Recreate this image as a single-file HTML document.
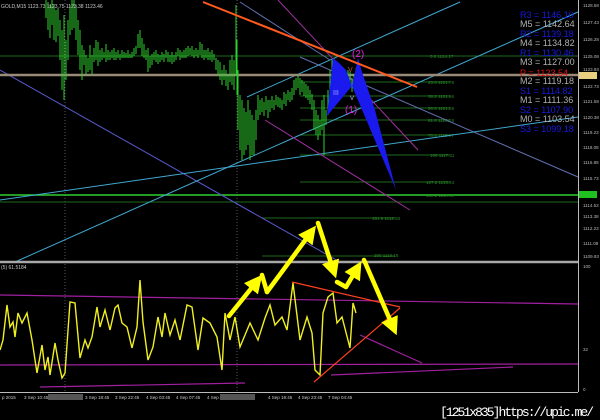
<!DOCTYPE html><html><head><style>html,body{margin:0;padding:0;background:#000;width:600px;height:420px;overflow:hidden}</style></head><body>
<svg width="600" height="420" xmlns="http://www.w3.org/2000/svg" font-family="Liberation Sans, sans-serif">
<defs><marker id="ah" markerWidth="4" markerHeight="4" refX="2.5" refY="2" orient="auto" markerUnits="strokeWidth"><path d="M0,0 L4,2 L0,4 z" fill="#ffff00"/></marker></defs>
<rect width="600" height="420" fill="#000"/>
<line x1="65" y1="0" x2="65" y2="392" stroke="#556" stroke-dasharray="1,2"/>
<line x1="237" y1="0" x2="237" y2="392" stroke="#556" stroke-dasharray="1,2"/>
<g stroke="#1e6a1e" stroke-width="1">
<line x1="0" y1="56" x2="578" y2="56"/><line x1="300" y1="82" x2="450" y2="82"/><line x1="300" y1="96" x2="450" y2="96"/>
<line x1="300" y1="108" x2="450" y2="108"/><line x1="300" y1="120" x2="450" y2="120"/><line x1="300" y1="135" x2="450" y2="135"/>
<line x1="300" y1="155" x2="450" y2="155"/><line x1="300" y1="182" x2="450" y2="182"/><line x1="0" y1="202" x2="578" y2="202"/>
<line x1="262" y1="218" x2="395" y2="218"/><line x1="262" y1="256" x2="395" y2="256"/>
</g>
<line x1="0" y1="195" x2="578" y2="195" stroke="#2fd02f" stroke-width="1.5"/>
<g fill="#2a8a2a" font-size="4.5"><text x="430" y="58">0.0 1124.17</text><text x="428" y="84">23.6 1121.78</text><text x="428" y="98">38.2 1121.96</text><text x="428" y="110">50.0 1121.09</text><text x="428" y="122">61.8 1120.18</text><text x="428" y="137">78.6 1118.97</text><text x="430" y="157">100 1117.31</text><text x="426" y="184">127.2 1115.44</text><text x="426" y="197">138.2 1114.64</text><text x="372" y="220">161.8 1112.93</text><text x="374" y="257">200 1110.18</text></g>
<g fill="none" stroke-width="1">
<line x1="0" y1="70" x2="340" y2="262" stroke="#5a5ad0"/>
<line x1="300" y1="57" x2="578" y2="177" stroke="#6070b0"/>
<line x1="0" y1="200" x2="578" y2="117" stroke="#40a8d0"/>
<line x1="15" y1="262" x2="300" y2="135" stroke="#40a8d0"/><line x1="300" y1="135" x2="578" y2="12" stroke="#40a8d0"/>
<line x1="247" y1="97" x2="460" y2="2" stroke="#40a8d0"/>
<line x1="240" y1="2" x2="330" y2="60" stroke="#6070b0"/>
<line x1="278" y1="0" x2="418" y2="150" stroke="#a030a0"/>
<line x1="265" y1="120" x2="410" y2="210" stroke="#a030a0"/>
</g>
<line x1="0" y1="75" x2="578" y2="75" stroke="#9a8a78" stroke-width="2.5"/>
<path stroke="#2ed02e" stroke-width="1" fill="none" d="M46 0V18 M48 2V30 M50 5V38 M52 0V25 M54 4V40 M56 10V42 M58 8V36 M60 20V60 M62 30V90 M64 15V100 M66 40V80 M68 20V60 M70 5V35 M72 0V30 M74 0V28 M76 5V40 M78 20V55 M80 30V70 M82 45V80 M84 50V65 M86 55V75 M88 58V72 M90 45V70 M92 55V75 M94 48V62 M96 40V60 M98 42V66 M100 50V62 M102 48V60 M104 52V58 M106 44V62 M108 50V60 M110 52V60 M112 50V58 M114 48V60 M116 52V60 M118 50V58 M120 54V60 M122 50V58 M124 52V58 M126 53V58 M128 50V58 M130 54V58 M132 52V58 M134 48V56 M136 46V54 M138 34V48 M140 30V48 M142 38V56 M144 44V58 M146 50V60 M148 48V72 M150 56V68 M152 54V65 M154 52V60 M156 50V62 M158 54V64 M160 55V62 M162 52V60 M164 54V62 M166 50V58 M168 52V62 M170 55V62 M172 52V64 M174 55V62 M176 52V60 M178 48V56 M180 50V60 M182 52V58 M184 50V58 M186 48V58 M188 46V56 M190 48V55 M192 46V56 M194 50V58 M196 48V56 M198 50V58 M200 42V55 M202 44V58 M204 50V60 M206 50V58 M208 48V60 M210 52V60 M212 50V62 M214 54V60 M216 58V70 M218 60V75 M220 62V80 M222 70V85 M224 65V80 M226 70V86 M228 75V90 M230 60V82 M232 55V85 M234 60V90 M236 5V75 M237 40V95 M238 70V130 M240 95V150 M242 100V160 M244 108V155 M246 112V150 M248 100V145 M250 110V160 M252 115V155 M254 120V155 M256 110V140 M258 95V120 M260 100V115 M262 98V112 M264 102V116 M266 96V110 M268 100V118 M270 100V112 M272 96V108 M274 100V110 M276 95V105 M278 97V107 M280 98V108 M282 100V110 M284 92V104 M286 94V106 M288 90V100 M290 92V102 M292 88V100 M294 80V95 M296 78V90 M298 75V88 M300 78V95 M302 80V92 M304 82V96 M306 84V98 M308 86V100 M310 90V104 M312 94V110 M314 100V130 M316 110V135 M318 115V140 M320 120V135 M322 100V130 M324 95V155 M326 110V125 M328 90V115 M330 70V100 M332 60V90 M334 58V80 M336 62V85 M338 66V95 M340 70V90 M342 72V85 M344 74V85 M346 76V88 M348 70V85 M350 72V82 M352 78V92 M354 74V85 M356 68V80 M358 60V72"/>
<polygon points="333,58 327,116 352,86 346,70 338,62" fill="#1a1aee"/>
<polygon points="358,58 352,86 396,190 375,110 362,72" fill="#1a1aee"/>
<text x="333" y="95" fill="#a0a0ff" font-size="7">III</text>
<text x="348" y="72" fill="#c06030" font-size="7">V</text>
<text x="350" y="100" fill="#c0c0ff" font-size="6">V</text>
<text x="352" y="57" fill="#e020e0" font-size="10">(2)</text>
<text x="345" y="113" fill="#e020e0" font-size="10">(1)</text>
<line x1="203" y1="2" x2="417" y2="87" stroke="#ff5a20" stroke-width="2"/>
<g font-size="9">
<text x="520" y="18" fill="#1a1ae0">R3 = 1146.10</text>
<text x="520" y="27" fill="#b0b0b0">M5 = 1142.64</text>
<text x="520" y="37" fill="#1a1ae0">R2 = 1139.18</text>
<text x="520" y="46" fill="#b0b0b0">M4 = 1134.82</text>
<text x="520" y="56" fill="#1a1ae0">R1 = 1130.46</text>
<text x="520" y="65" fill="#b0b0b0">M3 = 1127.00</text>
<text x="520" y="76" fill="#e01010">P  = 1123.54</text>
<text x="520" y="84" fill="#b0b0b0">M2 = 1119.18</text>
<text x="520" y="94" fill="#1a1ae0">S1 = 1114.82</text>
<text x="520" y="103" fill="#b0b0b0">M1 = 1111.36</text>
<text x="520" y="113" fill="#1a1ae0">S2 = 1107.90</text>
<text x="520" y="122" fill="#b0b0b0">M0 = 1103.54</text>
<text x="520" y="132" fill="#1a1ae0">S3 = 1099.18</text>
</g>
<line x1="578.5" y1="0" x2="578.5" y2="392" stroke="#bbb"/>
<g fill="#bbb" font-size="4.5">
<text x="583" y="7">1128.58</text><text x="583" y="24">1127.43</text><text x="583" y="41">1126.28</text><text x="583" y="58">1125.08</text><text x="583" y="71">1123.93</text><text x="583" y="88">1122.73</text><text x="583" y="103">1121.58</text><text x="583" y="119">1120.38</text><text x="583" y="134">1119.23</text><text x="583" y="149">1118.08</text><text x="583" y="164">1116.88</text><text x="583" y="180">1115.73</text><text x="583" y="207">1114.53</text><text x="583" y="218">1113.38</text><text x="583" y="230">1112.23</text><text x="583" y="245">1111.08</text><text x="583" y="258">1109.93</text><text x="583" y="268">100</text><text x="583" y="351">32</text><text x="583" y="391">0</text>
</g>
<rect x="579" y="72" width="18" height="7" fill="#e8d080"/>
<rect x="579" y="191" width="18" height="7" fill="#20c020"/>
<text x="1" y="8" fill="#ccc" font-size="5">GOLD,M15  1123.73  1123.75  1123.38  1123.46</text>
<line x1="0" y1="262" x2="578" y2="262" stroke="#a8a8a8" stroke-width="2.5"/>
<text x="1" y="269" fill="#ccc" font-size="5">(5) 61.5184</text>
<g stroke="#a020a0" stroke-width="1.2" fill="none">
<line x1="0" y1="295" x2="578" y2="304"/><line x1="0" y1="365" x2="578" y2="364"/>
<line x1="40" y1="387" x2="245" y2="383"/><line x1="331" y1="375" x2="513" y2="367"/><line x1="360" y1="335" x2="422" y2="363"/>
</g>
<polyline fill="none" stroke="#f0f020" stroke-width="1.4" points="0,350 3,340 7,305 10,327 13,322 15,337 18,313 22,323 27,313 32,340 37,373 42,345 45,370 48,357 50,375 55,343 58,360 62,378 65,373 70,302 75,303 80,358 85,340 88,348 92,337 97,307 100,327 105,310 110,330 115,308 118,305 122,323 127,327 132,348 137,327 140,280 143,322 148,360 153,347 158,317 162,337 165,313 170,335 175,320 180,340 187,305 192,307 198,350 203,318 210,323 217,337 222,370 225,313 230,340 235,317 240,347 245,335 250,323 258,340 265,318 270,305 275,325 282,317 287,330 293,283 300,340 307,317 312,333 315,370 320,375 323,313 328,297 333,293 337,323 342,317 350,348 353,303 356,313"/>
<line x1="292" y1="282" x2="400" y2="307" stroke="#ff4020" stroke-width="1.2"/>
<line x1="314" y1="382" x2="400" y2="308" stroke="#ff4020" stroke-width="1.2"/>
<g stroke="#ffff00" stroke-width="4.5" fill="none" stroke-linecap="round">
<line x1="229" y1="316" x2="258" y2="280" marker-end="url(#ah)"/>
<line x1="262" y1="275" x2="267" y2="292"/>
<line x1="267" y1="292" x2="312" y2="231" marker-end="url(#ah)"/>
<line x1="318" y1="223" x2="334" y2="272" marker-end="url(#ah)"/>
<line x1="337" y1="282" x2="346" y2="287"/>
<line x1="346" y1="287" x2="358" y2="267" marker-end="url(#ah)"/>
<line x1="364" y1="260" x2="394" y2="329" marker-end="url(#ah)"/>
</g>
<line x1="0" y1="392.5" x2="578" y2="392.5" stroke="#bbb"/>
<rect x="48" y="394" width="35" height="6" fill="#555"/><rect x="220" y="394" width="35" height="6" fill="#555"/>
<g fill="#ccc" font-size="4.5">
<text x="2" y="399">p 2015</text><text x="24" y="399">3 Sep 10:45</text><text x="85" y="399">3 Sep 18:45</text><text x="115" y="399">3 Sep 22:45</text><text x="146" y="399">4 Sep 03:45</text><text x="176" y="399">4 Sep 07:45</text><text x="207" y="399">4 Sep</text><text x="268" y="399">4 Sep 19:45</text><text x="298" y="399">4 Sep 23:45</text><text x="328" y="399">7 Sep 04:45</text>
</g>
<text x="440" y="416" fill="#fff" font-size="13" font-family="Liberation Mono, monospace" textLength="154">[1251x835]https://upic.me/</text>
</svg>
</body></html>
